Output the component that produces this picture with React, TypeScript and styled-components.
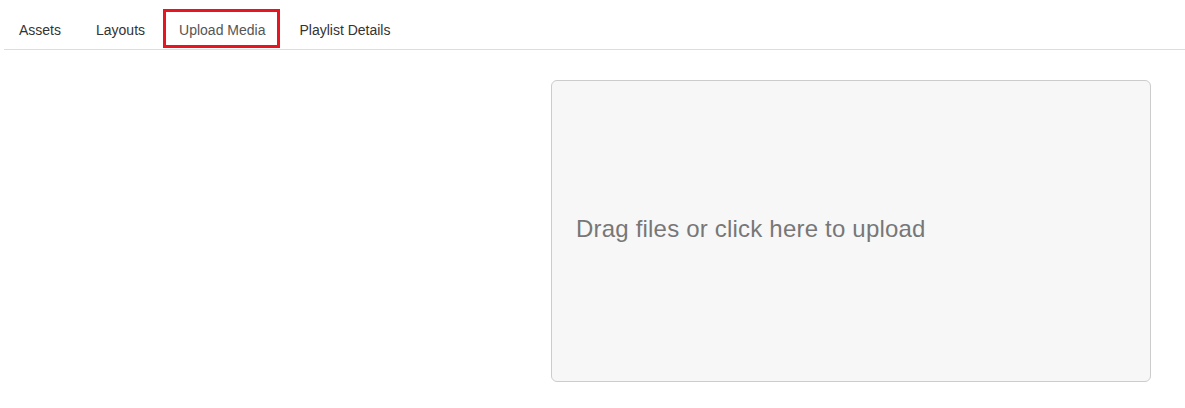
import React from 'react';
import styled, { createGlobalStyle } from 'styled-components';

const GlobalStyle = createGlobalStyle`
  body {
    margin: 0;
    background: #fff;
    font-family: "Liberation Sans", Arial, Helvetica, sans-serif;
  }
`;

const Page = styled.div`
  padding: 0 0 0 4px;
`;

const TabBar = styled.ul`
  display: flex;
  align-items: flex-end;
  list-style: none;
  margin: 0;
  padding: 9px 0 0;
  height: 40px;
  border-bottom: 1px solid #ddd;
`;

const Tab = styled.li<{ $active?: boolean }>`
  display: flex;
  align-items: center;
  box-sizing: border-box;
  height: 39px;
  margin: 0 ${(p) => (p.$active ? '4px' : '5px')} 1px ${(p) => (p.$active ? '-2px' : '0')};
  padding: 3px ${(p) => (p.$active ? '12px 0 13px' : '15px 0')};
  font-size: 14px;
  color: ${(p) => (p.$active ? '#555' : '#333')};
  border: ${(p) => (p.$active ? '3px solid #e8141f' : 'none')};
  cursor: pointer;
`;

const Body = styled.div`
  display: grid;
  grid-template-columns: 1fr 600px;
  padding: 30px 34px 0 0;
`;

const DropZone = styled.div`
  grid-column: 2;
  height: 302px;
  box-sizing: border-box;
  display: flex;
  align-items: center;
  padding: 0 24px 4px;
  background: #f7f7f7;
  border: 1px solid #ccc;
  border-radius: 6px;
  color: #777;
  font-size: 24px;
  letter-spacing: 0.2px;
  cursor: pointer;
`;

const tabs = ['Assets', 'Layouts', 'Upload Media', 'Playlist Details'];

export default function App() {
  return (
    <Page>
      <GlobalStyle />
      <TabBar>
        {tabs.map((t) => (
          <Tab key={t} $active={t === 'Upload Media'}>
            {t}
          </Tab>
        ))}
      </TabBar>
      <Body>
        <DropZone>Drag files or click here to upload</DropZone>
      </Body>
    </Page>
  );
}
